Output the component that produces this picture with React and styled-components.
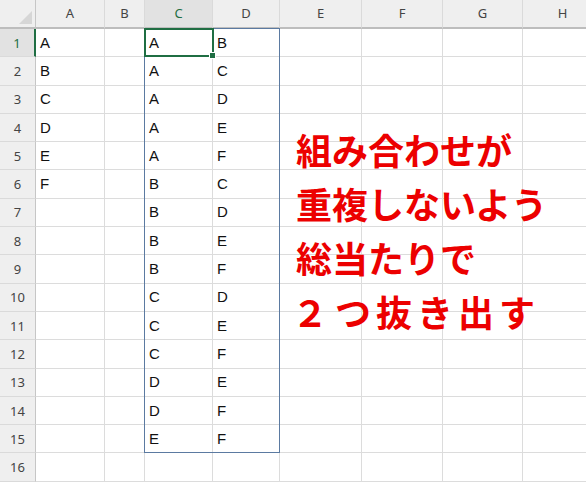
import React from "react";
import styled, { createGlobalStyle } from "styled-components";

const Global = createGlobalStyle`
  html, body { margin: 0; padding: 0; background: #fff; overflow: hidden; }
  body { font-family: "Liberation Sans", Arial, sans-serif; }
`;

const GRID = "#dcdcdc";
const HEAD_BG = "#efefef";
const GREEN = "#1f6e43";

const Page = styled.div`
  position: relative;
  width: 586px;
  height: 485px;
  overflow: hidden;
`;

const Sheet = styled.div`
  display: grid;
  grid-template-columns: 36px 69px 40px 68px 67px 82px 81px 80px 80px;
  grid-template-rows: 29px repeat(16, 28.3px);
`;

const Corner = styled.div`
  position: relative;
  grid-row: 1;
  grid-column: 1;
  background: ${HEAD_BG};
  border-right: 1px solid #c6c6c6;
  border-bottom: 2px solid #bdbdbd;
  box-sizing: border-box;
  &::after {
    content: "";
    position: absolute;
    right: 3px;
    bottom: 3px;
    width: 0;
    height: 0;
    border-left: 13px solid transparent;
    border-bottom: 13px solid #d6d6d6;
  }
`;

const ColHead = styled.div`
  grid-row: 1;
  grid-column: ${(p) => p.$col};
  display: flex;
  align-items: center;
  justify-content: center;
  box-sizing: border-box;
  background: ${(p) => (p.$active ? "#e2e2e2" : HEAD_BG)};
  color: ${(p) => (p.$active ? GREEN : "#444")};
  border-right: 1px solid #dadada;
  border-bottom: 2px solid #bdbdbd;
  font-family: "Noto Sans", sans-serif;
  font-size: 13px;
  padding-bottom: 1px;
`;

const RowHead = styled.div`
  grid-row: ${(p) => p.$row};
  grid-column: 1;
  display: flex;
  align-items: center;
  justify-content: center;
  box-sizing: border-box;
  background: ${(p) => (p.$active ? "#e2e2e2" : HEAD_BG)};
  color: ${(p) => (p.$active ? GREEN : "#444")};
  border-bottom: 1px solid #dadada;
  border-right: ${(p) => (p.$active ? `2px solid ${GREEN}` : "1px solid #c6c6c6")};
  font-family: "Noto Sans", sans-serif;
  font-size: 13px;
`;

const Cell = styled.div`
  grid-row: ${(p) => p.$row};
  grid-column: ${(p) => p.$col};
  display: flex;
  align-items: center;
  box-sizing: border-box;
  padding-left: 4px;
  padding-bottom: 1px;
  border-right: 1px solid ${GRID};
  border-bottom: 1px solid ${GRID};
  color: #111;
  font-size: 15px;
  white-space: nowrap;
  overflow: hidden;
`;

const RangeBox = styled.div`
  grid-column: 4 / 6;
  grid-row: 2 / 17;
  margin-left: -1px;
  margin-top: -1px;
  border: 1px solid #5b7aa1;
  pointer-events: none;
  z-index: 1;
`;

const ActiveBox = styled.div`
  position: relative;
  grid-column: 4 / 5;
  grid-row: 2 / 3;
  margin-left: -1px;
  margin-top: -1px;
  margin-right: -1px;
  border: 2px solid ${GREEN};
  pointer-events: none;
  z-index: 2;
  &::after {
    content: "";
    position: absolute;
    right: -4px;
    bottom: -4px;
    width: 5px;
    height: 5px;
    background: ${GREEN};
    border: 1px solid #fff;
  }
`;

const Caption = styled.div`
  position: absolute;
  left: 296px;
  top: 122px;
  display: flex;
  flex-direction: column;
  color: #ec0000;
  font-family: "Noto Sans CJK JP", sans-serif;
  font-weight: 700;
  font-size: 36px;
  line-height: 54px;
  z-index: 3;
`;

const CaptionLine = styled.div`
  white-space: nowrap;
  letter-spacing: ${(p) => p.$spacing || 0}px;
`;

const Digit = styled.span`
  display: inline-block;
  margin-left: -4px;
  margin-right: ${(p) => p.$gap}px;
`;

const cols = ["A", "B", "C", "D", "E", "F", "G", "H"];
const colA = ["A", "B", "C", "D", "E", "F"];
const pairs = [
  ["A", "B"], ["A", "C"], ["A", "D"], ["A", "E"], ["A", "F"],
  ["B", "C"], ["B", "D"], ["B", "E"], ["B", "F"],
  ["C", "D"], ["C", "E"], ["C", "F"],
  ["D", "E"], ["D", "F"],
  ["E", "F"],
];

export default function App() {
  const rows = Array.from({ length: 16 }, (_, i) => i + 1);
  return (
    <Page>
      <Global />
      <Sheet>
        <Corner />
        {cols.map((c, i) => (
          <ColHead key={c} $col={i + 2} $active={c === "C"}>{c}</ColHead>
        ))}
        {rows.map((r) => {
          const pair = pairs[r - 1] || ["", ""];
          const values = [colA[r - 1] || "", "", pair[0], pair[1], "", "", "", ""];
          return (
            <React.Fragment key={r}>
              <RowHead $row={r + 1} $active={r === 1}>{r}</RowHead>
              {values.map((v, i) => (
                <Cell key={i} $row={r + 1} $col={i + 2}>{v}</Cell>
              ))}
            </React.Fragment>
          );
        })}
        <RangeBox />
        <ActiveBox />
      </Sheet>
      <Caption>
        <CaptionLine>組み合わせが</CaptionLine>
        <CaptionLine>重複しないよう</CaptionLine>
        <CaptionLine>総当たりで</CaptionLine>
        <CaptionLine $spacing={5}><Digit $gap={2}>２</Digit>つ抜き出す</CaptionLine>
      </Caption>
    </Page>
  );
}
